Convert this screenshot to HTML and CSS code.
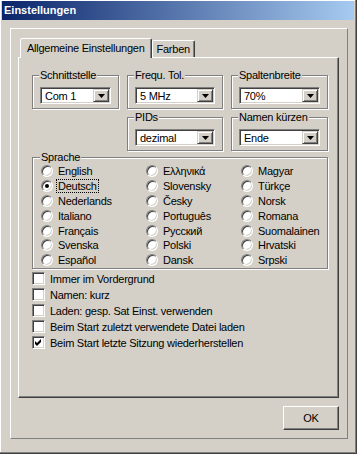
FILE: index.html
```html
<!DOCTYPE html>
<html>
  <head>
    <title>Einstellungen</title>
    <link rel="stylesheet" href="styles.css">
  </head>

  <body>
    <div class="window">
      <div class="titlebar">Einstellungen</div>

      <div class="panel">
        <div class="tabs">
          <div class="tab active">Allgemeine Einstellungen</div>
          <div class="tab">Farben</div>
        </div>

        <div class="pane">
          <div class="row">
            <fieldset class="group w1">
              <legend>Schnittstelle</legend>
              <div class="combo"><span class="val">Com 1</span><span class="drop"><svg width="7" height="4"><polygon points="0,0 7,0 3.5,4" fill="#000"/></svg></span></div>
            </fieldset>
            <fieldset class="group w2">
              <legend>Frequ. Tol.</legend>
              <div class="combo"><span class="val">5 MHz</span><span class="drop"><svg width="7" height="4"><polygon points="0,0 7,0 3.5,4" fill="#000"/></svg></span></div>
            </fieldset>
            <fieldset class="group w3">
              <legend>Spaltenbreite</legend>
              <div class="combo"><span class="val">70%</span><span class="drop"><svg width="7" height="4"><polygon points="0,0 7,0 3.5,4" fill="#000"/></svg></span></div>
            </fieldset>
          </div>

          <div class="row row2">
            <fieldset class="group w2">
              <legend>PIDs</legend>
              <div class="combo"><span class="val">dezimal</span><span class="drop"><svg width="7" height="4"><polygon points="0,0 7,0 3.5,4" fill="#000"/></svg></span></div>
            </fieldset>
            <fieldset class="group w3">
              <legend>Namen kürzen</legend>
              <div class="combo"><span class="val">Ende</span><span class="drop"><svg width="7" height="4"><polygon points="0,0 7,0 3.5,4" fill="#000"/></svg></span></div>
            </fieldset>
          </div>

          <fieldset class="group lang">
            <legend>Sprache</legend>
            <div class="radios">
              <div class="opt"><span class="radio"></span>English</div>
              <div class="opt"><span class="radio"></span>Ελληνικά</div>
              <div class="opt"><span class="radio"></span>Magyar</div>
              <div class="opt"><span class="radio on"></span><span class="focus">Deutsch</span></div>
              <div class="opt"><span class="radio"></span>Slovensky</div>
              <div class="opt"><span class="radio"></span>Türkçe</div>
              <div class="opt"><span class="radio"></span>Nederlands</div>
              <div class="opt"><span class="radio"></span>Česky</div>
              <div class="opt"><span class="radio"></span>Norsk</div>
              <div class="opt"><span class="radio"></span>Italiano</div>
              <div class="opt"><span class="radio"></span>Português</div>
              <div class="opt"><span class="radio"></span>Romana</div>
              <div class="opt"><span class="radio"></span>Français</div>
              <div class="opt"><span class="radio"></span>Русский</div>
              <div class="opt"><span class="radio"></span>Suomalainen</div>
              <div class="opt"><span class="radio"></span>Svenska</div>
              <div class="opt"><span class="radio"></span>Polski</div>
              <div class="opt"><span class="radio"></span>Hrvatski</div>
              <div class="opt"><span class="radio"></span>Español</div>
              <div class="opt"><span class="radio"></span>Dansk</div>
              <div class="opt"><span class="radio"></span>Srpski</div>
            </div>
          </fieldset>

          <div class="checks">
            <div class="chk"><span class="cb"></span>Immer im Vordergrund</div>
            <div class="chk"><span class="cb"></span>Namen: kurz</div>
            <div class="chk"><span class="cb"></span>Laden: gesp. Sat Einst. verwenden</div>
            <div class="chk"><span class="cb"></span>Beim Start zuletzt verwendete Datei laden</div>
            <div class="chk"><span class="cb"><svg width="7" height="7"><polygon points="0,2 2,4 6,0 6,3 2,7 0,5" fill="#000"/></svg></span>Beim Start letzte Sitzung wiederherstellen</div>
          </div>
        </div>

        <div class="footer">
          <button class="ok">OK</button>
        </div>
      </div>
    </div>
  </body>
</html>
```

FILE: styles.css
```css
body {
  margin: 0;
  background: #d4d0c8;
  font-family: "Liberation Sans", Arial, sans-serif;
  font-size: 11px;
  letter-spacing: -0.25px;
  color: #000;
}

.window {
  width: 357px;
  height: 454px;
  box-sizing: border-box;
  padding: 1px 2px 2px 2px;
  border-right: 1px solid #404040;
  border-bottom: 1px solid #404040;
  box-shadow: inset -1px -1px #808080, inset 1px 1px #fff;
}

.titlebar {
  height: 19px;
  line-height: 19px;
  padding-left: 2px;
  background: linear-gradient(to right, #0a246a, #a6caf0);
  color: #fff;
  font-weight: bold;
  letter-spacing: 0;
}

.panel {
  margin: 8px 6px 0 8px;
  padding: 9px 8px 8px 7px;
  border: 1px solid;
  border-color: #fff #808080 #808080 #fff;
}

/* tab strip */
.tabs {
  display: flex;
  align-items: flex-end;
  height: 19px;
  margin-left: 2px;
  position: relative;
  z-index: 1;
}

.tab {
  height: 17px;
  line-height: 17px;
  box-sizing: border-box;
  padding: 0 4px;
  border: 1px solid;
  border-bottom: none;
  border-color: #fff #404040 transparent #fff;
  border-radius: 2px 2px 0 0;
  box-shadow: inset -1px 0 #808080;
}

.tab.active {
  height: 20px;
  line-height: 19px;
  margin-bottom: -1px;
  padding: 0 6px;
  background: #d4d0c8;
}

.pane {
  height: 341px;
  box-sizing: border-box;
  padding: 11px 10px 0 13px;
  border: 1px solid;
  border-color: #fff #404040 #404040 #fff;
  box-shadow: inset -1px -1px #808080;
}

/* group boxes */
.row {
  display: flex;
  gap: 8px;
}

.row2 {
  margin-top: 2px;
  margin-left: 95px;
}

.group {
  margin: 0;
  min-width: 0;
  box-sizing: border-box;
  padding: 5px 7px 4px 7px;
  border: 1px solid #808080;
  box-shadow: 1px 1px 0 #fff, inset 1px 1px 0 #fff;
}

.group legend {
  margin-left: -1px;
  padding: 0 1px;
  line-height: 13px;
  background: #d4d0c8;
}

.w1 { width: 87px; }
.w2 { width: 96px; }
.w3 { width: 97px; }

.combo {
  display: flex;
  align-items: center;
  height: 17px;
  box-sizing: border-box;
  padding: 1px;
  background: #fff;
  border: 1px solid;
  border-color: #808080 #fff #fff #808080;
  box-shadow: inset 1px 1px #404040, inset -1px -1px #d4d0c8;
}

.combo .val {
  flex: 1;
  padding-left: 3px;
}

.combo .drop {
  display: flex;
  align-items: center;
  justify-content: center;
  width: 16px;
  height: 13px;
  box-sizing: border-box;
  background: #d4d0c8;
  border: 1px solid;
  border-color: #d4d0c8 #404040 #404040 #d4d0c8;
  box-shadow: inset 1px 1px #fff, inset -1px -1px #808080;
}

/* language radios */
.lang {
  width: 296px;
  padding: 0 6px 0 8px;
}

.radios {
  display: grid;
  grid-template-columns: 105px 95px auto;
  grid-auto-rows: 14.8px;
}

.opt {
  display: flex;
  align-items: center;
  gap: 5px;
  white-space: nowrap;
}

.radio {
  flex: none;
  position: relative;
  width: 12px;
  height: 12px;
  box-sizing: border-box;
  border-radius: 50%;
  border: 1px solid;
  border-color: #808080 #fff #fff #808080;
  background: #fff;
  box-shadow: inset 1px 1px #404040, inset -1px -1px #d4d0c8;
}

.radio.on::after {
  content: "";
  position: absolute;
  left: 3px;
  top: 3px;
  width: 4px;
  height: 4px;
  border-radius: 50%;
  background: #000;
}

.focus {
  padding: 0 1px;
  margin-left: -1px;
  outline: 1px dotted #000;
}

/* checkboxes */
.checks {
  margin-top: 2px;
}

.chk {
  display: flex;
  align-items: center;
  gap: 5px;
  height: 16px;
}

.cb {
  flex: none;
  display: flex;
  align-items: center;
  justify-content: center;
  width: 13px;
  height: 13px;
  box-sizing: border-box;
  border: 1px solid;
  border-color: #808080 #fff #fff #808080;
  background: #fff;
  box-shadow: inset 1px 1px #404040, inset -1px -1px #d4d0c8;
}

.footer {
  display: flex;
  justify-content: flex-end;
  margin-top: 8px;
}

.ok {
  width: 56px;
  height: 24px;
  padding: 0;
  background: #d4d0c8;
  font-family: inherit;
  font-size: 11px;
  letter-spacing: inherit;
  color: #000;
  border: 1px solid;
  border-color: #fff #404040 #404040 #fff;
  box-shadow: inset -1px -1px #808080;
}
```
